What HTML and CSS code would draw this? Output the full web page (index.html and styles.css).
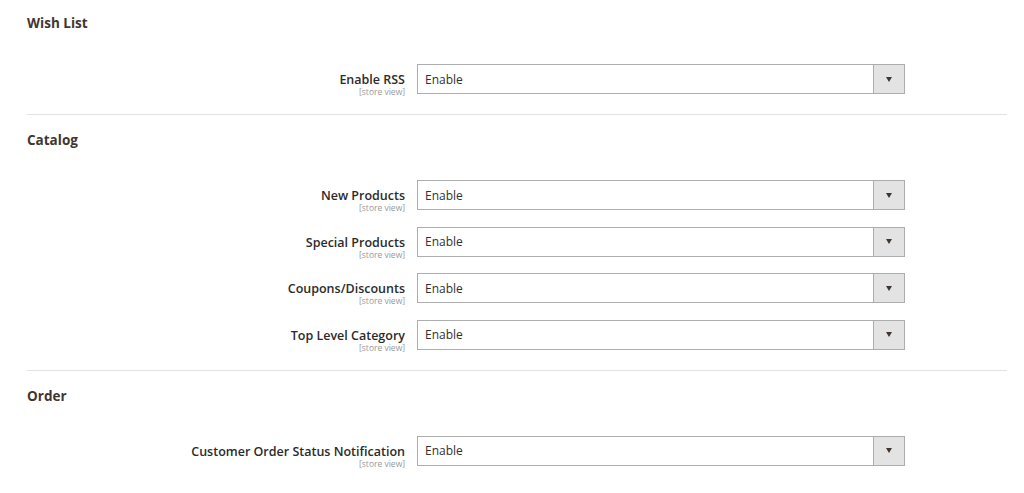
FILE: index.html
```html
<!DOCTYPE html>
<html>
<head>
<meta charset="utf-8">
<link rel="stylesheet" href="styles.css">
</head>
<body>
<div class="page">
  <section class="group">
    <h2 class="group-title">Wish List</h2>
    <div class="rows">
      <div class="row">
        <div class="label"><span class="label-text">Enable RSS</span><span class="scope">[store view]</span></div>
        <div class="select"><span class="value">Enable</span><span class="btn"><span class="arrow"></span></span></div>
      </div>
    </div>
  </section>
  <section class="group">
    <h2 class="group-title">Catalog</h2>
    <div class="rows">
      <div class="row">
        <div class="label"><span class="label-text">New Products</span><span class="scope">[store view]</span></div>
        <div class="select"><span class="value">Enable</span><span class="btn"><span class="arrow"></span></span></div>
      </div>
      <div class="row">
        <div class="label"><span class="label-text">Special Products</span><span class="scope">[store view]</span></div>
        <div class="select"><span class="value">Enable</span><span class="btn"><span class="arrow"></span></span></div>
      </div>
      <div class="row">
        <div class="label"><span class="label-text">Coupons/Discounts</span><span class="scope">[store view]</span></div>
        <div class="select"><span class="value">Enable</span><span class="btn"><span class="arrow"></span></span></div>
      </div>
      <div class="row">
        <div class="label"><span class="label-text">Top Level Category</span><span class="scope">[store view]</span></div>
        <div class="select"><span class="value">Enable</span><span class="btn"><span class="arrow"></span></span></div>
      </div>
    </div>
  </section>
  <section class="group last">
    <h2 class="group-title">Order</h2>
    <div class="rows">
      <div class="row">
        <div class="label"><span class="label-text">Customer Order Status Notification</span><span class="scope">[store view]</span></div>
        <div class="select"><span class="value">Enable</span><span class="btn"><span class="arrow"></span></span></div>
      </div>
    </div>
  </section>
</div>
</body>
</html>
```
FILE: styles.css
```css
html, body {
  margin: 0;
  padding: 0;
  background: #ffffff;
}
body {
  font-family: "Open Sans", "Liberation Sans", sans-serif;
  color: #303030;
}
.page {
  width: 980px;
  margin-left: 27px;
  padding-top: 13px;
}
.group {
  border-bottom: 1px solid #e3e3e3;
  padding-bottom: 20px;
  margin-bottom: 14px;
}
.group.last {
  border-bottom: none;
}
.group-title {
  margin: 0;
  font-size: 13.5px;
  font-weight: 700;
  line-height: 20px;
  color: #41362f;
}
.group + .group .group-title {
  padding-top: 1px;
}
.rows {
  margin-top: 31px;
  display: flex;
  flex-direction: column;
  gap: 16.67px;
}
.group + .group .rows {
  margin-top: 30px;
}
.row {
  display: flex;
  align-items: flex-start;
  height: 30px;
}
.label {
  width: 378px;
  display: flex;
  flex-direction: column;
  align-items: flex-end;
  padding-top: 8px;
}
.label-text {
  font-size: 12.5px;
  font-weight: 600;
  line-height: 15px;
  color: #2b2b2b;
}
.scope {
  font-size: 8.5px;
  line-height: 10px;
  color: #999999;
}
.select {
  margin-left: 12px;
  width: 486px;
  height: 28px;
  border: 1px solid #adadad;
  display: flex;
  align-items: center;
  background: #fff;
}
.value {
  flex: 1;
  padding-left: 7px;
  font-size: 12px;
  color: #303030;
}
.btn {
  width: 30px;
  height: 28px;
  border-left: 1px solid #adadad;
  background: #e3e3e3;
  display: flex;
  align-items: center;
  justify-content: center;
}
.arrow {
  width: 0;
  height: 0;
  border-left: 3.5px solid transparent;
  border-right: 3.5px solid transparent;
  border-top: 5px solid #41362f;
}
```
